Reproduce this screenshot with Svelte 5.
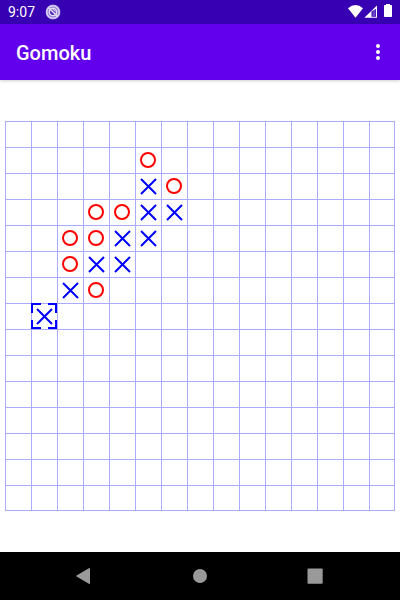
<script>
  const SIZE = 15;
  const start = [
    { row: 1, col: 5, mark: 'O' },
    { row: 2, col: 5, mark: 'X' },
    { row: 2, col: 6, mark: 'O' },
    { row: 3, col: 3, mark: 'O' },
    { row: 3, col: 4, mark: 'O' },
    { row: 3, col: 5, mark: 'X' },
    { row: 3, col: 6, mark: 'X' },
    { row: 4, col: 2, mark: 'O' },
    { row: 4, col: 3, mark: 'O' },
    { row: 4, col: 4, mark: 'X' },
    { row: 4, col: 5, mark: 'X' },
    { row: 5, col: 2, mark: 'O' },
    { row: 5, col: 3, mark: 'X' },
    { row: 5, col: 4, mark: 'X' },
    { row: 6, col: 2, mark: 'X' },
    { row: 6, col: 3, mark: 'O' },
    { row: 7, col: 1, mark: 'X' },
  ];

  const initial = Array(SIZE * SIZE).fill('');
  for (const s of start) initial[s.row * SIZE + s.col] = s.mark;

  let cells = $state(initial);
  let last = $state(7 * SIZE + 1);
  let next = $state('O');

  function play(i) {
    if (cells[i]) return;
    cells[i] = next;
    last = i;
    next = next === 'X' ? 'O' : 'X';
  }
</script>

<div class="screen">
  <div class="status">
    <span class="time">9:07</span>
    <svg class="notice" width="16" height="16" viewBox="0 0 16 16" aria-hidden="true">
      <circle cx="8" cy="8" r="7.4" fill="#9a80d8" />
      <circle cx="8" cy="8" r="6.3" fill="none" stroke="#d8d0f0" stroke-width="1.6" />
      <circle cx="8" cy="8" r="3.6" fill="#4a1abb" stroke="#e4def5" stroke-width="1.4" />
      <path d="M4 4 L12.500 12.500" stroke="#e4def5" stroke-width="1.6" />
      <path d="M7 5 Q10.500 4.500 11 8.500 Z" fill="#e4def5" />
    </svg>
    <span class="fill"></span>
    <svg width="48" height="16" viewBox="0 0 48 16" aria-hidden="true">
      <path d="M0 4.200 Q7.500 -2 15 4.200 L7.500 13.800 Z" fill="#fff" />
      <path d="M29 1.500 V13.800 H16.300 Z" fill="#fff" />
      <path d="M28 5 V12.800 H23.500 V7.500 Z" fill="#3700b3" />
      <path d="M24.500 8 L27.500 5 V12.500 H24.500 Z" fill="#6d45ca" />
      <path d="M38 0 h4 v1 h1.200 q0.800 0 0.800 0.800 v10.400 q0 0.800 -0.800 0.800 h-6.400 q-0.800 0 -0.800 -0.800 v-10.400 q0 -0.800 0.800 -0.800 h1.200 z" fill="#fff" />
    </svg>
  </div>

  <header>
    <h1>Gomoku</h1>
    <button class="more" aria-label="More options">
      <svg width="24" height="24" viewBox="0 0 24 24" fill="#fff" aria-hidden="true">
        <circle cx="12" cy="6" r="2" /><circle cx="12" cy="12" r="2" /><circle cx="12" cy="18" r="2" />
      </svg>
    </button>
  </header>

  <main>
    <div class="board">
      {#each cells as mark, i}
        <button
          class="cell"
          aria-label={`Row ${Math.floor(i / SIZE) + 1}, column ${(i % SIZE) + 1}${mark ? ', ' + mark : ''}`}
          onclick={() => play(i)}
        >
          {#if mark}
            <svg viewBox="0 0 26 26" fill="none" stroke-width="2" aria-hidden="true">
              {#if mark === 'O'}
                <circle cx="13" cy="13" r="7" stroke="#f00" />
              {:else}
                <path d="M6 6 L21 21 M21 6 L6 21" stroke="#00f" />
              {/if}
              {#if i === last}
                <path d="M1 10 V1 H10 M17 1 H25 V10 M25 17 V25 H17 M10 25 H1 V17" stroke="#00f" />
              {/if}
            </svg>
          {/if}
        </button>
      {/each}
    </div>
  </main>

  <nav>
    <button aria-label="Back">
      <svg width="24" height="24" viewBox="0 0 24 24" fill="#999" aria-hidden="true">
        <path d="M18.300 4 Q19 3.700 19 4.600 V19.400 Q19 20.300 18.300 20 L5.500 12.600 Q4.800 12 5.500 11.400 Z" />
      </svg>
    </button>
    <button aria-label="Home">
      <svg width="24" height="24" viewBox="0 0 24 24" fill="#999" aria-hidden="true">
        <circle cx="13" cy="12" r="7" />
      </svg>
    </button>
    <button aria-label="Recent apps">
      <svg width="24" height="24" viewBox="0 0 24 24" fill="#999" aria-hidden="true">
        <rect x="4.500" y="4.500" width="15.200" height="15.200" rx="1" />
      </svg>
    </button>
  </nav>
</div>

<style>
  :global(body) {
    margin: 0;
  }
  .screen {
    display: flex;
    flex-direction: column;
    min-height: 100vh;
    background: #fff;
    font-family: Roboto, 'Liberation Sans', sans-serif;
  }
  button {
    margin: 0;
    padding: 0;
    border: 0;
    background: none;
    cursor: pointer;
  }
  svg {
    display: block;
  }
  .status {
    display: flex;
    align-items: center;
    height: 24px;
    padding: 0 4px 0 8px;
    background: #3700b3;
    color: #fff;
  }
  .time {
    font-size: 14px;
    line-height: 24px;
  }
  .notice {
    margin-left: 10px;
  }
  .fill {
    flex: 1;
  }
  header {
    display: flex;
    align-items: center;
    justify-content: space-between;
    height: 56px;
    padding: 0 10px 0 16px;
    background: #6200ee;
    color: #fff;
    box-shadow: 0 1px 3px rgba(0, 0, 0, 0.2);
  }
  h1 {
    margin: 0;
    padding-top: 2px;
    font-size: 20px;
    line-height: 28px;
    font-weight: 500;
  }
  main {
    flex: 1;
    display: flex;
    align-items: center;
    justify-content: center;
    padding: 0 5px;
  }
  .board {
    position: relative;
    display: grid;
    grid-template-columns: repeat(15, 1fr);
    width: 100%;
  }
  .board::after {
    content: '';
    position: absolute;
    inset: 0;
    border: 1px solid #aaf;
    pointer-events: none;
  }
  .cell {
    aspect-ratio: 1;
    background: linear-gradient(#aaf, #aaf) 0 0 / 100% 1px no-repeat,
      linear-gradient(#aaf, #aaf) 0 0 / 1px 100% no-repeat;
  }
  .cell svg {
    width: 100%;
    height: 100%;
  }
  nav {
    display: flex;
    align-items: center;
    justify-content: space-between;
    height: 48px;
    padding: 0 73px 0 71px;
    background: #000;
  }
</style>
